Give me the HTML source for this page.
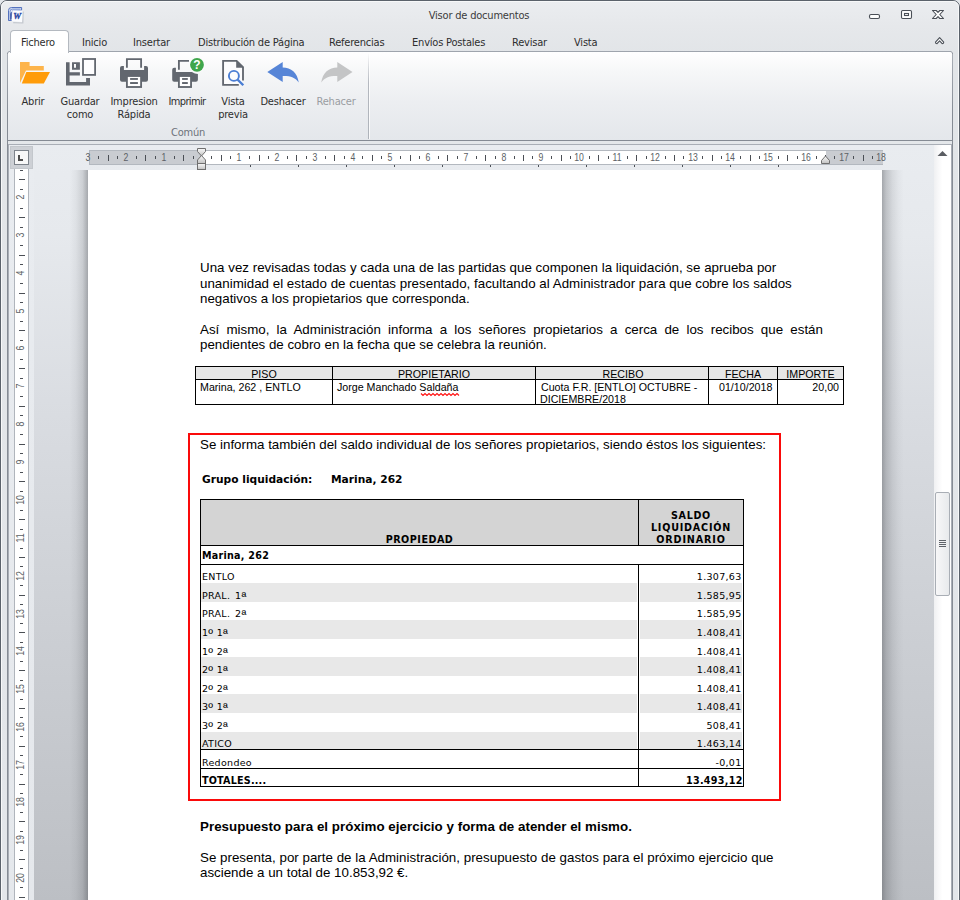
<!DOCTYPE html>
<html lang="es"><head><meta charset="utf-8"><title>Visor de documentos</title>
<style>
*{box-sizing:border-box;margin:0;padding:0}
html,body{width:960px;height:900px;overflow:hidden;background:#e4e7eb}
body{position:relative;font-family:"DejaVu Sans Condensed","DejaVu Sans","Liberation Sans",sans-serif;font-size:11px;color:#2b2b2b}
div,span,svg{position:absolute}
.ui{font-family:"DejaVu Sans Condensed","DejaVu Sans",sans-serif;font-size:11px;white-space:nowrap;color:#2e2e2e;line-height:13px}
.ar{font-family:"Liberation Sans",sans-serif;white-space:nowrap;color:#000}
.vd{font-family:"DejaVu Sans","Liberation Sans",sans-serif;white-space:nowrap;color:#000}
.c{text-align:center}
.r{text-align:right}
.b{font-weight:bold}
.o{position:static;font-family:"Liberation Sans",sans-serif;font-size:13px;line-height:0;vertical-align:-2px}
</style></head><body>
<div style="left:0;top:0;width:960px;height:920px;border:1px solid #5b626b;border-radius:7px;background:linear-gradient(#ebedf0 0,#e6e8eb 25px,#e2e5e8 52px,#e3e6ea 100%)"></div>
<div style="left:1px;top:1px;width:958px;height:920px;border:1px solid #f7f8f9;border-radius:6px"></div>
<svg style="left:0;top:0" width="30" height="28" viewBox="0 0 30 28"><path d="M8.500 20.500 V10.500 Q8.500 7.500 11.500 7.500 H21.600 V10.300 H12.500 V20.500 Z" fill="#dbe4f6" stroke="#4464b8" stroke-width=".9"/><path d="M10.100 19.800 V11.200 Q10.100 9.100 12.200 9.100 H20.500" fill="none" stroke="#6b88cc" stroke-width=".9"/><path d="M10 13.500 Q11 11.800 12.300 11.500 L12 19.600 L10 19.800 Z" fill="#2c4ba4" opacity=".75"/><path d="M13.200 22.600 L22.800 23 L23.200 11.500" fill="none" stroke="#9aa0aa" stroke-width="1.200" opacity=".45"/><path d="M12.300 10.200 L22.400 10.600 L22 22.100 L11.600 21.200 Z" fill="#fbfcff"/><text x="17.200" y="18.700" font-family="Liberation Serif,serif" font-style="italic" font-weight="bold" font-size="8.800" text-anchor="middle" fill="#2843a0" stroke="#2843a0" stroke-width=".3">W</text></svg>
<div class="ui c" style="left:379px;top:9px;width:200px;letter-spacing:-.2px;color:#3b3b3b">Visor de documentos</div>
<svg style="left:866px;top:7px" width="84" height="16" viewBox="0 0 84 16" fill="none" stroke="#4a4f57" stroke-width="1.1"><rect x="3.5" y="7.5" width="10" height="4" rx="1.5" fill="#fdfdfd"/><rect x="35.5" y="3.5" width="10" height="8" rx="1.2" fill="#fdfdfd"/><rect x="38.5" y="6.5" width="4" height="2" fill="#fdfdfd"/><path d="M66.500 3.500 h3.700 l1.800 1.900 l1.800 -1.900 h3.700 l-3.700 4 l3.700 4 h-3.700 l-1.800 -1.900 l-1.800 1.900 h-3.700 l3.700 -4 z" fill="#fdfdfd" stroke-linejoin="round"/></svg>
<svg style="left:933px;top:35px" width="14" height="11" viewBox="0 0 14 11"><path d="M2.500 7.200 L6.600 2.600 L10.700 7.200 Q10.700 8.700 9.200 8.700 L6.600 5.900 L4 8.700 Q2.500 8.700 2.500 7.200 Z" fill="#fdfdfd" stroke="#4a4f57" stroke-width="1.100" stroke-linejoin="round"/></svg>
<div style="left:7px;top:51px;width:946px;height:870px;border:1px solid #858b94;border-radius:3px 3px 0 0;background:#e4e7ea"></div>
<div style="left:8px;top:52px;width:944px;height:88px;border-radius:2px 2px 0 0;background:linear-gradient(#ffffff 0,#f6f7f8 20px,#eceef1 50px,#e4e7eb 100%)"></div>
<div style="left:8px;top:140px;width:944px;height:1px;background:#858b94"></div>
<div style="left:9px;top:51px;width:942px;height:1px;background:#9fa5ad"></div>
<div style="left:7px;top:54px;width:1px;height:60px;background:linear-gradient(#a9aeb6,#858b94)"></div>
<div style="left:952px;top:54px;width:1px;height:60px;background:linear-gradient(#a9aeb6,#858b94)"></div>
<div style="left:10px;top:30px;width:59px;height:23px;border:1px solid #b4b9c0;border-bottom:none;border-radius:4px 4px 0 0;background:#fff"></div>
<span class="ui" style="left:21px;top:36px;letter-spacing:-.2px">Fichero</span>
<span class="ui" style="left:82px;top:36px;letter-spacing:-.2px">Inicio</span>
<span class="ui" style="left:133px;top:36px;letter-spacing:-.2px">Insertar</span>
<span class="ui" style="left:198px;top:36px;letter-spacing:-.2px">Distribución de Página</span>
<span class="ui" style="left:329px;top:36px;letter-spacing:-.2px">Referencias</span>
<span class="ui" style="left:412px;top:36px;letter-spacing:-.2px">Envíos Postales</span>
<span class="ui" style="left:512px;top:36px;letter-spacing:-.2px">Revisar</span>
<span class="ui" style="left:574px;top:36px;letter-spacing:-.2px">Vista</span>
<div class="ui c" style="left:-7px;top:95px;width:80px;letter-spacing:-.2px;color:#2e2e2e">Abrir</div>
<div class="ui c" style="left:40px;top:95px;width:80px;letter-spacing:-.2px;color:#2e2e2e">Guardar</div>
<div class="ui c" style="left:40px;top:108px;width:80px;letter-spacing:-.2px;color:#2e2e2e">como</div>
<div class="ui c" style="left:94px;top:95px;width:80px;letter-spacing:-.2px;color:#2e2e2e">Impresion</div>
<div class="ui c" style="left:94px;top:108px;width:80px;letter-spacing:-.2px;color:#2e2e2e">Rápida</div>
<div class="ui c" style="left:147px;top:95px;width:80px;letter-spacing:-.65px;color:#2e2e2e">Imprimir</div>
<div class="ui c" style="left:193px;top:95px;width:80px;letter-spacing:-.2px;color:#2e2e2e">Vista</div>
<div class="ui c" style="left:193px;top:108px;width:80px;letter-spacing:-.2px;color:#2e2e2e">previa</div>
<div class="ui c" style="left:243px;top:95px;width:80px;letter-spacing:-.2px;color:#2e2e2e">Deshacer</div>
<div class="ui c" style="left:296px;top:95px;width:80px;letter-spacing:-.2px;color:#9a9da2">Rehacer</div>
<div class="ui c" style="left:148px;top:126px;width:80px;letter-spacing:-.2px;color:#6d727a">Común</div>
<div style="left:368px;top:53px;width:1px;height:86px;background:linear-gradient(rgba(170,175,182,0),#b4b8bf 35%,#aeb3ba 100%)"></div>
<div style="left:369px;top:53px;width:1px;height:86px;background:rgba(255,255,255,.75)"></div>
<svg style="left:0;top:0" width="400" height="100" viewBox="0 0 400 100"><path d="M20 62 h9.600 l0 4 h14.200 v4.500 h-17.800 l-6 12.500 z" fill="#fdb44b"/><path d="M26.300 72 h23.700 l-6.200 11.600 h-22 z" fill="#ff9c0a"/><path d="M66 62.250 h3.600 v10.050 h10.300 v3.200 h-10.300 v6.460 h16.500 v-3.900 h3.900 v7.540 h-24 z" fill="#62676f"/><path d="M72 62.250 h7.900 v7.550 h-7.900 z M74 64.100 v3.650 h2 v-3.650 z" fill="#62676f" fill-rule="evenodd"/><rect x="83" y="59" width="12.100" height="15.900" fill="#fdfdfe" stroke="#62676f" stroke-width="1.800"/><path d="M126.900 67.750 v-8.700 h14.200 v8.700" fill="none" stroke="#62676f" stroke-width="1.850"/><path d="M122 66 h1.900 v4 h20.200 v-4 h1.900 q2 0 2 2 v11.700 q0 2 -2 2 h-24 q-2 0 -2 -2 v-11.700 q0 -2 2 -2 z" fill="#62676f"/><rect x="126.900" y="76" width="14.200" height="11" fill="#fff" stroke="#62676f" stroke-width="1.850"/><rect x="130.100" y="78.050" width="7.800" height="1.850" fill="#62676f"/><rect x="130.100" y="82.050" width="7.800" height="1.950" fill="#62676f"/><path d="M178.900 69.800 v-8.900 h10.100" fill="none" stroke="#62676f" stroke-width="1.850"/><path d="M174.200 67.750 h1.700 v4.350 h16 q3 1.900 6 1.900 v5.700 q0 2 -2 2 h-21.700 q-2 0 -2 -2 v-9.950 q0 -2 2 -2 z" fill="#62676f"/><rect x="178.900" y="76" width="12.150" height="11" fill="#fff" stroke="#62676f" stroke-width="1.850"/><rect x="182.100" y="78.050" width="5.700" height="1.850" fill="#62676f"/><rect x="182.100" y="82.050" width="5.700" height="1.950" fill="#62676f"/><circle cx="197" cy="64.800" r="7.900" fill="#fbfbfc"/><circle cx="197" cy="64.800" r="6.900" fill="#3fa64c"/><text x="197" y="69.300" font-family="Liberation Sans,sans-serif" font-weight="bold" font-size="12" text-anchor="middle" fill="#fff">?</text><path d="M243 80.600 v-13.400 l-6.400 -6.300 h-13.500 v24 h15.700" fill="#fcfcfd" stroke="#62676f" stroke-width="1.850"/><path d="M236.200 60.400 v7.300 h7.300 z" fill="#62676f"/><circle cx="233.900" cy="75.900" r="5" fill="#fcfcfd" stroke="#4a7dd3" stroke-width="1.900"/><path d="M237.600 79.600 l5.700 5.600" stroke="#4a7dd3" stroke-width="2.300" fill="none"/><path d="M267.300 71.900 L282.700 62.100 V67.400 C291 67.400 297.500 72.500 298.750 82.600 C295.500 77.500 290.500 75.700 282.700 75.900 V81.900 Z" fill="#5685d7"/><path d="M352.500 71.900 L337.300 62.100 V67.400 C329 67.400 322.500 72.500 321.250 82.600 C324.500 77.500 329.500 75.700 337.300 75.900 V81.900 Z" fill="#c4c5c6"/></svg>
<div style="left:8px;top:144px;width:944px;height:770px;border:1px solid #a9aeb6;background:linear-gradient(#e9ecf0 0,#e6e9ed 90px,#d9dce1 270px,#cbced3 500px,#bcbfc4 756px)"></div>
<div style="left:9px;top:145px;width:25px;height:760px;background:linear-gradient(#e9ecf0,#e5e8ec)"></div>
<div style="left:34px;top:170px;width:54px;height:740px;background:linear-gradient(90deg,rgba(48,51,56,0) 0,rgba(48,51,56,0) 66%,rgba(48,51,56,.05) 78%,rgba(48,51,56,.15) 90%,rgba(48,51,56,.36) 100%)"></div>
<div style="left:882px;top:170px;width:52px;height:740px;background:linear-gradient(90deg,rgba(48,51,56,.37) 0,rgba(48,51,56,.22) 8%,rgba(48,51,56,.10) 20%,rgba(48,51,56,.03) 32%,rgba(48,51,56,0) 42%)"></div>
<div style="left:88px;top:170px;width:794px;height:740px;background:#fff"></div>
<div style="left:934px;top:145px;width:17px;height:760px;background:linear-gradient(90deg,#eff0f2 0,#f8f8f9 25%,#fff 50%)"></div>
<svg style="left:937px;top:150px" width="11" height="7" viewBox="0 0 11 7"><path d="M0.500 6 L5.500 1 L10.500 6 Z" fill="#5a5d62"/></svg>
<div style="left:935px;top:492px;width:15px;height:104px;border:1px solid #a9aeb5;border-radius:2px;background:linear-gradient(90deg,#f7f7f8,#e8eaec)"></div>
<div style="left:939px;top:540px;width:7px;height:1px;background:#5f6369"></div>
<div style="left:939px;top:542px;width:7px;height:1px;background:#5f6369"></div>
<div style="left:939px;top:544px;width:7px;height:1px;background:#5f6369"></div>
<div style="left:939px;top:546px;width:7px;height:1px;background:#5f6369"></div>
<div style="left:10px;top:146px;width:23px;height:23px;background:#cdd0d5;border:1px solid #c3c7cc"></div>
<div style="left:14px;top:150px;width:15px;height:15px;background:#f8f8f8;border:1px solid #7d838b"></div>
<div style="left:18px;top:155px;width:2px;height:6px;background:#4d4d4d"></div><div style="left:18px;top:159px;width:5px;height:2px;background:#4d4d4d"></div>
<div style="left:89px;top:150px;width:794px;height:15px;background:#c9ccd1;border:1px solid #b3b8bf;border-right:none"></div>
<div style="left:202px;top:151px;width:624px;height:13px;background:#fff"></div>
<span class="ar c" style="left:78.3px;top:150px;width:20px;font-size:10.600px;line-height:14px;color:#5b5f65;transform:scaleX(.82)">3</span>
<div style="left:98px;top:156px;width:1px;height:3px;background:#4b4f55"></div>
<div style="left:108px;top:155px;width:1px;height:6px;background:#4b4f55"></div>
<div style="left:117px;top:156px;width:1px;height:3px;background:#4b4f55"></div>
<span class="ar c" style="left:116.1px;top:150px;width:20px;font-size:10.600px;line-height:14px;color:#5b5f65;transform:scaleX(.82)">2</span>
<div style="left:136px;top:156px;width:1px;height:3px;background:#4b4f55"></div>
<div style="left:145px;top:155px;width:1px;height:6px;background:#4b4f55"></div>
<div style="left:155px;top:156px;width:1px;height:3px;background:#4b4f55"></div>
<span class="ar c" style="left:153.8px;top:150px;width:20px;font-size:10.600px;line-height:14px;color:#5b5f65;transform:scaleX(.82)">1</span>
<div style="left:174px;top:156px;width:1px;height:3px;background:#4b4f55"></div>
<div style="left:183px;top:155px;width:1px;height:6px;background:#4b4f55"></div>
<div style="left:193px;top:156px;width:1px;height:3px;background:#4b4f55"></div>
<div style="left:211px;top:156px;width:1px;height:3px;background:#4b4f55"></div>
<div style="left:221px;top:155px;width:1px;height:6px;background:#4b4f55"></div>
<div style="left:230px;top:156px;width:1px;height:3px;background:#4b4f55"></div>
<span class="ar c" style="left:229.4px;top:150px;width:20px;font-size:10.600px;line-height:14px;color:#5b5f65;transform:scaleX(.82)">1</span>
<div style="left:249px;top:156px;width:1px;height:3px;background:#4b4f55"></div>
<div style="left:259px;top:155px;width:1px;height:6px;background:#4b4f55"></div>
<div style="left:268px;top:156px;width:1px;height:3px;background:#4b4f55"></div>
<span class="ar c" style="left:267.1px;top:150px;width:20px;font-size:10.600px;line-height:14px;color:#5b5f65;transform:scaleX(.82)">2</span>
<div style="left:287px;top:156px;width:1px;height:3px;background:#4b4f55"></div>
<div style="left:296px;top:155px;width:1px;height:6px;background:#4b4f55"></div>
<div style="left:306px;top:156px;width:1px;height:3px;background:#4b4f55"></div>
<span class="ar c" style="left:304.9px;top:150px;width:20px;font-size:10.600px;line-height:14px;color:#5b5f65;transform:scaleX(.82)">3</span>
<div style="left:325px;top:156px;width:1px;height:3px;background:#4b4f55"></div>
<div style="left:334px;top:155px;width:1px;height:6px;background:#4b4f55"></div>
<div style="left:344px;top:156px;width:1px;height:3px;background:#4b4f55"></div>
<span class="ar c" style="left:342.6px;top:150px;width:20px;font-size:10.600px;line-height:14px;color:#5b5f65;transform:scaleX(.82)">4</span>
<div style="left:362px;top:156px;width:1px;height:3px;background:#4b4f55"></div>
<div style="left:372px;top:155px;width:1px;height:6px;background:#4b4f55"></div>
<div style="left:381px;top:156px;width:1px;height:3px;background:#4b4f55"></div>
<span class="ar c" style="left:380.4px;top:150px;width:20px;font-size:10.600px;line-height:14px;color:#5b5f65;transform:scaleX(.82)">5</span>
<div style="left:400px;top:156px;width:1px;height:3px;background:#4b4f55"></div>
<div style="left:410px;top:155px;width:1px;height:6px;background:#4b4f55"></div>
<div style="left:419px;top:156px;width:1px;height:3px;background:#4b4f55"></div>
<span class="ar c" style="left:418.2px;top:150px;width:20px;font-size:10.600px;line-height:14px;color:#5b5f65;transform:scaleX(.82)">6</span>
<div style="left:438px;top:156px;width:1px;height:3px;background:#4b4f55"></div>
<div style="left:447px;top:155px;width:1px;height:6px;background:#4b4f55"></div>
<div style="left:457px;top:156px;width:1px;height:3px;background:#4b4f55"></div>
<span class="ar c" style="left:455.9px;top:150px;width:20px;font-size:10.600px;line-height:14px;color:#5b5f65;transform:scaleX(.82)">7</span>
<div style="left:476px;top:156px;width:1px;height:3px;background:#4b4f55"></div>
<div style="left:485px;top:155px;width:1px;height:6px;background:#4b4f55"></div>
<div style="left:495px;top:156px;width:1px;height:3px;background:#4b4f55"></div>
<span class="ar c" style="left:493.7px;top:150px;width:20px;font-size:10.600px;line-height:14px;color:#5b5f65;transform:scaleX(.82)">8</span>
<div style="left:514px;top:156px;width:1px;height:3px;background:#4b4f55"></div>
<div style="left:523px;top:155px;width:1px;height:6px;background:#4b4f55"></div>
<div style="left:532px;top:156px;width:1px;height:3px;background:#4b4f55"></div>
<span class="ar c" style="left:531.4px;top:150px;width:20px;font-size:10.600px;line-height:14px;color:#5b5f65;transform:scaleX(.82)">9</span>
<div style="left:551px;top:156px;width:1px;height:3px;background:#4b4f55"></div>
<div style="left:561px;top:155px;width:1px;height:6px;background:#4b4f55"></div>
<div style="left:570px;top:156px;width:1px;height:3px;background:#4b4f55"></div>
<span class="ar c" style="left:569.2px;top:150px;width:20px;font-size:10.600px;line-height:14px;color:#5b5f65;transform:scaleX(.82)">10</span>
<div style="left:589px;top:156px;width:1px;height:3px;background:#4b4f55"></div>
<div style="left:598px;top:155px;width:1px;height:6px;background:#4b4f55"></div>
<div style="left:608px;top:156px;width:1px;height:3px;background:#4b4f55"></div>
<span class="ar c" style="left:607.0px;top:150px;width:20px;font-size:10.600px;line-height:14px;color:#5b5f65;transform:scaleX(.82)">11</span>
<div style="left:627px;top:156px;width:1px;height:3px;background:#4b4f55"></div>
<div style="left:636px;top:155px;width:1px;height:6px;background:#4b4f55"></div>
<div style="left:646px;top:156px;width:1px;height:3px;background:#4b4f55"></div>
<span class="ar c" style="left:644.7px;top:150px;width:20px;font-size:10.600px;line-height:14px;color:#5b5f65;transform:scaleX(.82)">12</span>
<div style="left:665px;top:156px;width:1px;height:3px;background:#4b4f55"></div>
<div style="left:674px;top:155px;width:1px;height:6px;background:#4b4f55"></div>
<div style="left:683px;top:156px;width:1px;height:3px;background:#4b4f55"></div>
<span class="ar c" style="left:682.5px;top:150px;width:20px;font-size:10.600px;line-height:14px;color:#5b5f65;transform:scaleX(.82)">13</span>
<div style="left:702px;top:156px;width:1px;height:3px;background:#4b4f55"></div>
<div style="left:712px;top:155px;width:1px;height:6px;background:#4b4f55"></div>
<div style="left:721px;top:156px;width:1px;height:3px;background:#4b4f55"></div>
<span class="ar c" style="left:720.2px;top:150px;width:20px;font-size:10.600px;line-height:14px;color:#5b5f65;transform:scaleX(.82)">14</span>
<div style="left:740px;top:156px;width:1px;height:3px;background:#4b4f55"></div>
<div style="left:750px;top:155px;width:1px;height:6px;background:#4b4f55"></div>
<div style="left:759px;top:156px;width:1px;height:3px;background:#4b4f55"></div>
<span class="ar c" style="left:758.0px;top:150px;width:20px;font-size:10.600px;line-height:14px;color:#5b5f65;transform:scaleX(.82)">15</span>
<div style="left:778px;top:156px;width:1px;height:3px;background:#4b4f55"></div>
<div style="left:787px;top:155px;width:1px;height:6px;background:#4b4f55"></div>
<div style="left:797px;top:156px;width:1px;height:3px;background:#4b4f55"></div>
<span class="ar c" style="left:795.8px;top:150px;width:20px;font-size:10.600px;line-height:14px;color:#5b5f65;transform:scaleX(.82)">16</span>
<div style="left:816px;top:156px;width:1px;height:3px;background:#4b4f55"></div>
<div style="left:825px;top:155px;width:1px;height:6px;background:#4b4f55"></div>
<div style="left:834px;top:156px;width:1px;height:3px;background:#4b4f55"></div>
<span class="ar c" style="left:833.5px;top:150px;width:20px;font-size:10.600px;line-height:14px;color:#5b5f65;transform:scaleX(.82)">17</span>
<div style="left:853px;top:156px;width:1px;height:3px;background:#4b4f55"></div>
<div style="left:863px;top:155px;width:1px;height:6px;background:#4b4f55"></div>
<div style="left:872px;top:156px;width:1px;height:3px;background:#4b4f55"></div>
<span class="ar c" style="left:871.3px;top:150px;width:20px;font-size:10.600px;line-height:14px;color:#5b5f65;transform:scaleX(.82)">18</span>
<div style="left:250px;top:165px;width:1px;height:2px;background:#4b4f55"></div>
<div style="left:298px;top:165px;width:1px;height:2px;background:#4b4f55"></div>
<div style="left:346px;top:165px;width:1px;height:2px;background:#4b4f55"></div>
<div style="left:394px;top:165px;width:1px;height:2px;background:#4b4f55"></div>
<div style="left:442px;top:165px;width:1px;height:2px;background:#4b4f55"></div>
<div style="left:490px;top:165px;width:1px;height:2px;background:#4b4f55"></div>
<div style="left:538px;top:165px;width:1px;height:2px;background:#4b4f55"></div>
<div style="left:586px;top:165px;width:1px;height:2px;background:#4b4f55"></div>
<div style="left:634px;top:165px;width:1px;height:2px;background:#4b4f55"></div>
<div style="left:682px;top:165px;width:1px;height:2px;background:#4b4f55"></div>
<div style="left:730px;top:165px;width:1px;height:2px;background:#4b4f55"></div>
<div style="left:778px;top:165px;width:1px;height:2px;background:#4b4f55"></div>
<svg style="left:196px;top:147px" width="12" height="24" viewBox="0 0 12 24"><defs><linearGradient id="hg" x1="0" y1="0" x2="0" y2="1"><stop offset="0" stop-color="#fafafa"/><stop offset="1" stop-color="#c2c2c2"/></linearGradient></defs><path d="M1.500 1.500 h8 v3 l-4 4.500 l-4 -4.500 z" fill="url(#hg)" stroke="#6f6f6f"/><path d="M1.500 16.500 v-3.500 l4 -4.500 l4 4.500 v3.500 z" fill="url(#hg)" stroke="#6f6f6f"/><rect x="1.500" y="16.500" width="8" height="6" fill="url(#hg)" stroke="#6f6f6f"/></svg>
<svg style="left:820px;top:155px" width="12" height="10" viewBox="0 0 12 10"><path d="M1.500 8.500 v-3 l4 -4.500 l4 4.500 v3 z" fill="url(#hg)" stroke="#6f6f6f"/></svg>
<div style="left:14px;top:169px;width:15px;height:740px;background:#fff;border-left:1px solid #b0b5bc;border-right:1px solid #b0b5bc"></div>
<div style="left:20px;top:170px;width:3px;height:1px;background:#4b4f55"></div>
<div style="left:19px;top:179px;width:6px;height:1px;background:#4b4f55"></div>
<div style="left:20px;top:189px;width:3px;height:1px;background:#4b4f55"></div>
<span class="ar c" style="left:10.300px;top:190.2px;width:20px;height:14px;font-size:10.600px;line-height:14px;color:#5b5f65;transform:rotate(-90deg) scaleX(.82)">2</span>
<div style="left:20px;top:208px;width:3px;height:1px;background:#4b4f55"></div>
<div style="left:19px;top:217px;width:6px;height:1px;background:#4b4f55"></div>
<div style="left:20px;top:227px;width:3px;height:1px;background:#4b4f55"></div>
<span class="ar c" style="left:10.300px;top:228.0px;width:20px;height:14px;font-size:10.600px;line-height:14px;color:#5b5f65;transform:rotate(-90deg) scaleX(.82)">3</span>
<div style="left:20px;top:245px;width:3px;height:1px;background:#4b4f55"></div>
<div style="left:19px;top:255px;width:6px;height:1px;background:#4b4f55"></div>
<div style="left:20px;top:264px;width:3px;height:1px;background:#4b4f55"></div>
<span class="ar c" style="left:10.300px;top:265.7px;width:20px;height:14px;font-size:10.600px;line-height:14px;color:#5b5f65;transform:rotate(-90deg) scaleX(.82)">4</span>
<div style="left:20px;top:283px;width:3px;height:1px;background:#4b4f55"></div>
<div style="left:19px;top:293px;width:6px;height:1px;background:#4b4f55"></div>
<div style="left:20px;top:302px;width:3px;height:1px;background:#4b4f55"></div>
<span class="ar c" style="left:10.300px;top:303.5px;width:20px;height:14px;font-size:10.600px;line-height:14px;color:#5b5f65;transform:rotate(-90deg) scaleX(.82)">5</span>
<div style="left:20px;top:321px;width:3px;height:1px;background:#4b4f55"></div>
<div style="left:19px;top:330px;width:6px;height:1px;background:#4b4f55"></div>
<div style="left:20px;top:340px;width:3px;height:1px;background:#4b4f55"></div>
<span class="ar c" style="left:10.300px;top:341.3px;width:20px;height:14px;font-size:10.600px;line-height:14px;color:#5b5f65;transform:rotate(-90deg) scaleX(.82)">6</span>
<div style="left:20px;top:359px;width:3px;height:1px;background:#4b4f55"></div>
<div style="left:19px;top:368px;width:6px;height:1px;background:#4b4f55"></div>
<div style="left:20px;top:378px;width:3px;height:1px;background:#4b4f55"></div>
<span class="ar c" style="left:10.300px;top:379.0px;width:20px;height:14px;font-size:10.600px;line-height:14px;color:#5b5f65;transform:rotate(-90deg) scaleX(.82)">7</span>
<div style="left:20px;top:396px;width:3px;height:1px;background:#4b4f55"></div>
<div style="left:19px;top:406px;width:6px;height:1px;background:#4b4f55"></div>
<div style="left:20px;top:415px;width:3px;height:1px;background:#4b4f55"></div>
<span class="ar c" style="left:10.300px;top:416.8px;width:20px;height:14px;font-size:10.600px;line-height:14px;color:#5b5f65;transform:rotate(-90deg) scaleX(.82)">8</span>
<div style="left:20px;top:434px;width:3px;height:1px;background:#4b4f55"></div>
<div style="left:19px;top:444px;width:6px;height:1px;background:#4b4f55"></div>
<div style="left:20px;top:453px;width:3px;height:1px;background:#4b4f55"></div>
<span class="ar c" style="left:10.300px;top:454.5px;width:20px;height:14px;font-size:10.600px;line-height:14px;color:#5b5f65;transform:rotate(-90deg) scaleX(.82)">9</span>
<div style="left:20px;top:472px;width:3px;height:1px;background:#4b4f55"></div>
<div style="left:19px;top:481px;width:6px;height:1px;background:#4b4f55"></div>
<div style="left:20px;top:491px;width:3px;height:1px;background:#4b4f55"></div>
<span class="ar c" style="left:10.300px;top:493.3px;width:20px;height:14px;font-size:10.600px;line-height:14px;color:#5b5f65;transform:rotate(-90deg) scaleX(.82)">10</span>
<div style="left:20px;top:510px;width:3px;height:1px;background:#4b4f55"></div>
<div style="left:19px;top:519px;width:6px;height:1px;background:#4b4f55"></div>
<div style="left:20px;top:529px;width:3px;height:1px;background:#4b4f55"></div>
<span class="ar c" style="left:10.300px;top:531.1px;width:20px;height:14px;font-size:10.600px;line-height:14px;color:#5b5f65;transform:rotate(-90deg) scaleX(.82)">11</span>
<div style="left:20px;top:548px;width:3px;height:1px;background:#4b4f55"></div>
<div style="left:19px;top:557px;width:6px;height:1px;background:#4b4f55"></div>
<div style="left:20px;top:566px;width:3px;height:1px;background:#4b4f55"></div>
<span class="ar c" style="left:10.300px;top:568.8px;width:20px;height:14px;font-size:10.600px;line-height:14px;color:#5b5f65;transform:rotate(-90deg) scaleX(.82)">12</span>
<div style="left:20px;top:585px;width:3px;height:1px;background:#4b4f55"></div>
<div style="left:19px;top:595px;width:6px;height:1px;background:#4b4f55"></div>
<div style="left:20px;top:604px;width:3px;height:1px;background:#4b4f55"></div>
<span class="ar c" style="left:10.300px;top:606.6px;width:20px;height:14px;font-size:10.600px;line-height:14px;color:#5b5f65;transform:rotate(-90deg) scaleX(.82)">13</span>
<div style="left:20px;top:623px;width:3px;height:1px;background:#4b4f55"></div>
<div style="left:19px;top:632px;width:6px;height:1px;background:#4b4f55"></div>
<div style="left:20px;top:642px;width:3px;height:1px;background:#4b4f55"></div>
<span class="ar c" style="left:10.300px;top:644.3px;width:20px;height:14px;font-size:10.600px;line-height:14px;color:#5b5f65;transform:rotate(-90deg) scaleX(.82)">14</span>
<div style="left:20px;top:661px;width:3px;height:1px;background:#4b4f55"></div>
<div style="left:19px;top:670px;width:6px;height:1px;background:#4b4f55"></div>
<div style="left:20px;top:680px;width:3px;height:1px;background:#4b4f55"></div>
<span class="ar c" style="left:10.300px;top:682.1px;width:20px;height:14px;font-size:10.600px;line-height:14px;color:#5b5f65;transform:rotate(-90deg) scaleX(.82)">15</span>
<div style="left:20px;top:699px;width:3px;height:1px;background:#4b4f55"></div>
<div style="left:19px;top:708px;width:6px;height:1px;background:#4b4f55"></div>
<div style="left:20px;top:717px;width:3px;height:1px;background:#4b4f55"></div>
<span class="ar c" style="left:10.300px;top:719.9px;width:20px;height:14px;font-size:10.600px;line-height:14px;color:#5b5f65;transform:rotate(-90deg) scaleX(.82)">16</span>
<div style="left:20px;top:736px;width:3px;height:1px;background:#4b4f55"></div>
<div style="left:19px;top:746px;width:6px;height:1px;background:#4b4f55"></div>
<div style="left:20px;top:755px;width:3px;height:1px;background:#4b4f55"></div>
<span class="ar c" style="left:10.300px;top:757.6px;width:20px;height:14px;font-size:10.600px;line-height:14px;color:#5b5f65;transform:rotate(-90deg) scaleX(.82)">17</span>
<div style="left:20px;top:774px;width:3px;height:1px;background:#4b4f55"></div>
<div style="left:19px;top:784px;width:6px;height:1px;background:#4b4f55"></div>
<div style="left:20px;top:793px;width:3px;height:1px;background:#4b4f55"></div>
<span class="ar c" style="left:10.300px;top:795.4px;width:20px;height:14px;font-size:10.600px;line-height:14px;color:#5b5f65;transform:rotate(-90deg) scaleX(.82)">18</span>
<div style="left:20px;top:812px;width:3px;height:1px;background:#4b4f55"></div>
<div style="left:19px;top:821px;width:6px;height:1px;background:#4b4f55"></div>
<div style="left:20px;top:831px;width:3px;height:1px;background:#4b4f55"></div>
<span class="ar c" style="left:10.300px;top:833.1px;width:20px;height:14px;font-size:10.600px;line-height:14px;color:#5b5f65;transform:rotate(-90deg) scaleX(.82)">19</span>
<div style="left:20px;top:850px;width:3px;height:1px;background:#4b4f55"></div>
<div style="left:19px;top:859px;width:6px;height:1px;background:#4b4f55"></div>
<div style="left:20px;top:868px;width:3px;height:1px;background:#4b4f55"></div>
<span class="ar c" style="left:10.300px;top:870.9px;width:20px;height:14px;font-size:10.600px;line-height:14px;color:#5b5f65;transform:rotate(-90deg) scaleX(.82)">20</span>
<div style="left:20px;top:887px;width:3px;height:1px;background:#4b4f55"></div>
<div style="left:19px;top:897px;width:6px;height:1px;background:#4b4f55"></div>
<div style="left:20px;top:906px;width:3px;height:1px;background:#4b4f55"></div>
<span class="ar c" style="left:10.300px;top:908.7px;width:20px;height:14px;font-size:10.600px;line-height:14px;color:#5b5f65;transform:rotate(-90deg) scaleX(.82)">21</span>
<span class="ar" style="left:200px;top:260px;font-size:13.33px;line-height:16px;letter-spacing:.013px">Una vez revisadas todas y cada una de las partidas que componen la liquidación, se aprueba por</span>
<span class="ar" style="left:200px;top:276px;font-size:13.33px;line-height:16px;letter-spacing:.013px">unanimidad el estado de cuentas presentado, facultando al Administrador para que cobre los saldos</span>
<span class="ar" style="left:200px;top:291px;font-size:13.33px;line-height:16px;">negativos a los propietarios que corresponda.</span>
<span class="ar" style="left:200px;top:322px;font-size:13.33px;line-height:16px;word-spacing:3.5px">Así mismo, la Administración informa a los señores propietarios a cerca de los recibos que están</span>
<span class="ar" style="left:200px;top:337px;font-size:13.33px;line-height:16px;">pendientes de cobro en la fecha que se celebra la reunión.</span>
<div style="left:195px;top:366px;width:649px;height:39px;border:1px solid #000"></div>
<div style="left:196px;top:367px;width:647px;height:12px;background:#e6e6e6"></div>
<div style="left:195px;top:379px;width:649px;height:1px;background:#000"></div>
<div style="left:332px;top:366px;width:1px;height:39px;background:#000"></div>
<div style="left:535px;top:366px;width:1px;height:39px;background:#000"></div>
<div style="left:708px;top:366px;width:1px;height:39px;background:#000"></div>
<div style="left:777px;top:366px;width:1px;height:39px;background:#000"></div>
<div class="ar c" style="left:196px;top:368px;width:136px;font-size:10.67px;line-height:12px">PISO</div>
<div class="ar c" style="left:333px;top:368px;width:202px;font-size:10.67px;line-height:12px">PROPIETARIO</div>
<div class="ar c" style="left:537px;top:368px;width:172px;font-size:10.67px;line-height:12px">RECIBO</div>
<div class="ar c" style="left:709px;top:368px;width:68px;font-size:10.67px;line-height:12px">FECHA</div>
<div class="ar c" style="left:778px;top:368px;width:65px;font-size:10.67px;line-height:12px">IMPORTE</div>
<div class="ar " style="left:200px;top:381px;width:130px;font-size:10.67px;line-height:12px">Marina, 262 , ENTLO</div>
<div class="ar " style="left:337px;top:381px;width:190px;font-size:10.67px;line-height:12px">Jorge Manchado Saldaña</div>
<svg style="left:0;top:0" width="960" height="400" viewBox="0 0 960 400"><polyline points="421,393.5 423,395.5 425,393.5 427,395.5 429,393.5 431,395.5 433,393.5 435,395.5 437,393.5 439,395.5 441,393.5 443,395.5 445,393.5 447,395.5 449,393.5 451,395.5 453,393.5 455,395.5 457,393.5 459,395.5" fill="none" stroke="#ff1010" stroke-width="1.100"/></svg>
<div class="ar " style="left:541px;top:381px;width:165px;font-size:10.67px;line-height:12px">Cuota F.R. [ENTLO] OCTUBRE -</div>
<div class="ar " style="left:540px;top:393px;width:165px;font-size:10.67px;line-height:12px">DICIEMBRE/2018</div>
<div class="ar " style="left:719px;top:381px;width:68px;font-size:10.67px;line-height:12px">01/10/2018</div>
<div class="ar r" style="left:777px;top:381px;width:62px;font-size:10.67px;line-height:12px">20,00</div>
<div style="left:188px;top:433px;width:593px;height:368px;border:2px solid #fa0a0a"></div>
<span class="ar" style="left:200px;top:437px;font-size:13.33px;line-height:16px;">Se informa también del saldo individual de los señores propietarios, siendo éstos los siguientes:</span>
<span class="vd b" style="left:202px;top:473px;font-size:10.67px;line-height:14px">Grupo liquidación:</span>
<span class="vd b" style="left:331px;top:473px;font-size:10.67px;line-height:14px">Marina, 262</span>
<div style="left:200px;top:499px;width:544px;height:288px;border:1px solid #000"></div>
<div style="left:201px;top:500px;width:542px;height:45px;background:#d4d4d4"></div>
<div style="left:200px;top:545px;width:544px;height:1px;background:#000"></div>
<div style="left:200px;top:564px;width:544px;height:1px;background:#000"></div>
<div style="left:638px;top:499px;width:1px;height:47px;background:#000"></div>
<div style="left:638px;top:564px;width:1px;height:223px;background:#000"></div>
<div style="left:200px;top:749px;width:544px;height:1px;background:#000"></div>
<div style="left:200px;top:768px;width:544px;height:1px;background:#000"></div>
<div class="vd b c" style="left:201px;top:534px;width:437px;font-size:9.600px;line-height:12px;letter-spacing:0.5px">PROPIEDAD</div>
<div class="vd b c" style="left:639px;top:510px;width:104px;font-size:9.600px;line-height:12px;letter-spacing:0.67px">SALDO</div>
<div class="vd b c" style="left:639px;top:522px;width:104px;font-size:9.600px;line-height:12px;letter-spacing:0.8px">LIQUIDACIÓN</div>
<div class="vd b c" style="left:639px;top:534px;width:104px;font-size:9.600px;line-height:12px;letter-spacing:0.86px">ORDINARIO</div>
<div class="vd b " style="left:202px;top:550px;width:300px;font-size:9.600px;line-height:12px;letter-spacing:0.25px">Marina, 262</div>
<div style="left:201px;top:583px;width:436px;height:19px;background:#e8e8e8"></div>
<div style="left:640px;top:583px;width:102px;height:19px;background:#e8e8e8"></div>
<div style="left:201px;top:620px;width:436px;height:19px;background:#e8e8e8"></div>
<div style="left:640px;top:620px;width:102px;height:19px;background:#e8e8e8"></div>
<div style="left:201px;top:657px;width:436px;height:19px;background:#e8e8e8"></div>
<div style="left:640px;top:657px;width:102px;height:19px;background:#e8e8e8"></div>
<div style="left:201px;top:694px;width:436px;height:19px;background:#e8e8e8"></div>
<div style="left:640px;top:694px;width:102px;height:19px;background:#e8e8e8"></div>
<div style="left:201px;top:732px;width:436px;height:17px;background:#e8e8e8"></div>
<div style="left:640px;top:732px;width:102px;height:17px;background:#e8e8e8"></div>
<div class="vd " style="left:202px;top:571px;width:300px;font-size:9.500px;line-height:12px;letter-spacing:0.3px">ENTLO</div>
<div class="vd r" style="left:639px;top:571px;width:102.5px;font-size:9.500px;line-height:12px;letter-spacing:0.3px">1.307,63</div>
<div class="vd " style="left:202px;top:590px;width:300px;font-size:9.500px;line-height:12px;letter-spacing:0.3px;word-spacing:1.500px">PRAL. 1<span class="o">ª</span></div>
<div class="vd r" style="left:639px;top:590px;width:102.5px;font-size:9.500px;line-height:12px;letter-spacing:0.3px">1.585,95</div>
<div class="vd " style="left:202px;top:608px;width:300px;font-size:9.500px;line-height:12px;letter-spacing:0.3px;word-spacing:1.500px">PRAL. 2<span class="o">ª</span></div>
<div class="vd r" style="left:639px;top:608px;width:102.5px;font-size:9.500px;line-height:12px;letter-spacing:0.3px">1.585,95</div>
<div class="vd " style="left:202px;top:627px;width:300px;font-size:9.500px;line-height:12px;letter-spacing:0.3px">1<span class="o">º</span> 1<span class="o">ª</span></div>
<div class="vd r" style="left:639px;top:627px;width:102.5px;font-size:9.500px;line-height:12px;letter-spacing:0.3px">1.408,41</div>
<div class="vd " style="left:202px;top:646px;width:300px;font-size:9.500px;line-height:12px;letter-spacing:0.3px">1<span class="o">º</span> 2<span class="o">ª</span></div>
<div class="vd r" style="left:639px;top:646px;width:102.5px;font-size:9.500px;line-height:12px;letter-spacing:0.3px">1.408,41</div>
<div class="vd " style="left:202px;top:664px;width:300px;font-size:9.500px;line-height:12px;letter-spacing:0.3px">2<span class="o">º</span> 1<span class="o">ª</span></div>
<div class="vd r" style="left:639px;top:664px;width:102.5px;font-size:9.500px;line-height:12px;letter-spacing:0.3px">1.408,41</div>
<div class="vd " style="left:202px;top:683px;width:300px;font-size:9.500px;line-height:12px;letter-spacing:0.3px">2<span class="o">º</span> 2<span class="o">ª</span></div>
<div class="vd r" style="left:639px;top:683px;width:102.5px;font-size:9.500px;line-height:12px;letter-spacing:0.3px">1.408,41</div>
<div class="vd " style="left:202px;top:701px;width:300px;font-size:9.500px;line-height:12px;letter-spacing:0.3px">3<span class="o">º</span> 1<span class="o">ª</span></div>
<div class="vd r" style="left:639px;top:701px;width:102.5px;font-size:9.500px;line-height:12px;letter-spacing:0.3px">1.408,41</div>
<div class="vd " style="left:202px;top:720px;width:300px;font-size:9.500px;line-height:12px;letter-spacing:0.3px">3<span class="o">º</span> 2<span class="o">ª</span></div>
<div class="vd r" style="left:639px;top:720px;width:102.5px;font-size:9.500px;line-height:12px;letter-spacing:0.3px">508,41</div>
<div class="vd " style="left:202px;top:738px;width:300px;font-size:9.500px;line-height:12px;letter-spacing:0.3px">ATICO</div>
<div class="vd r" style="left:639px;top:738px;width:102.5px;font-size:9.500px;line-height:12px;letter-spacing:0.3px">1.463,14</div>
<div class="vd " style="left:202px;top:757px;width:300px;font-size:9.500px;line-height:12px;letter-spacing:0.3px">Redondeo</div>
<div class="vd r" style="left:639px;top:757px;width:102.5px;font-size:9.500px;line-height:12px;letter-spacing:0.3px">-0,01</div>
<div class="vd b " style="left:202px;top:775px;width:300px;font-size:9.600px;line-height:12px;letter-spacing:0.2px">TOTALES....</div>
<div class="vd b r" style="left:639px;top:775px;width:103.7px;font-size:9.600px;line-height:12px;letter-spacing:0.3px">13.493,12</div>
<span class="ar b" style="left:200px;top:819px;font-size:13.33px;line-height:16px;letter-spacing:.035px">Presupuesto para el próximo ejercicio y forma de atender el mismo.</span>
<span class="ar" style="left:200px;top:850px;font-size:13.33px;line-height:16px;letter-spacing:.016px">Se presenta, por parte de la Administración, presupuesto de gastos para el próximo ejercicio que</span>
<span class="ar" style="left:200px;top:865px;font-size:13.33px;line-height:16px;">asciende a un total de 10.853,92 €.</span>
</body></html>
